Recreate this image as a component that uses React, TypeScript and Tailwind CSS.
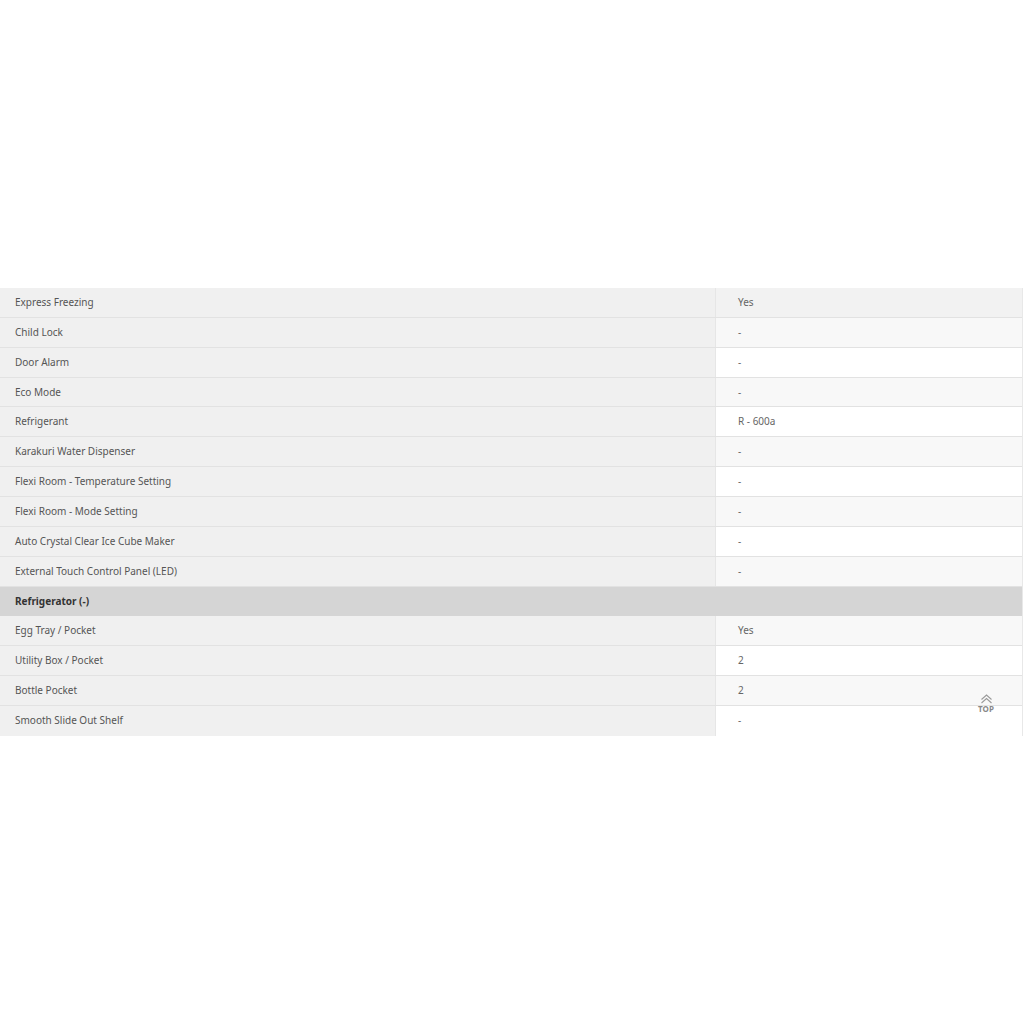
import React from "react";

type Row = { label: string; value?: string; heading?: boolean; rightBg?: string };

const rows: Row[] = [
  { label: "Express Freezing", value: "Yes", rightBg: "bg-[#f2f2f2]" },
  { label: "Child Lock", value: "-", rightBg: "bg-[#f8f8f8]" },
  { label: "Door Alarm", value: "-", rightBg: "bg-white" },
  { label: "Eco Mode", value: "-", rightBg: "bg-[#f8f8f8]" },
  { label: "Refrigerant", value: "R - 600a", rightBg: "bg-white" },
  { label: "Karakuri Water Dispenser", value: "-", rightBg: "bg-[#f8f8f8]" },
  { label: "Flexi Room - Temperature Setting", value: "-", rightBg: "bg-white" },
  { label: "Flexi Room - Mode Setting", value: "-", rightBg: "bg-[#f8f8f8]" },
  { label: "Auto Crystal Clear Ice Cube Maker", value: "-", rightBg: "bg-white" },
  { label: "External Touch Control Panel (LED)", value: "-", rightBg: "bg-[#f8f8f8]" },
  { label: "Refrigerator (-)", heading: true },
  { label: "Egg Tray / Pocket", value: "Yes", rightBg: "bg-[#f8f8f8]" },
  { label: "Utility Box / Pocket", value: "2", rightBg: "bg-white" },
  { label: "Bottle Pocket", value: "2", rightBg: "bg-[#f8f8f8]" },
  { label: "Smooth Slide Out Shelf", value: "-", rightBg: "bg-white" },
];

export default function App() {
  return (
    <div
      className="relative w-[1024px] h-[1024px] bg-white"
      style={{ fontFamily: '"Noto Sans", "Open Sans", sans-serif' }}
    >
      <div className="h-[288px]" />
      <div className="w-[1023px] border-r border-[#e8e8e8]">
        {rows.map((r, i) =>
          r.heading ? (
            <div
              key={i}
              className="h-[29.87px] flex items-center bg-[#d5d5d5] border-b border-[#d5d5d5] pl-[15px] text-[10px] font-bold text-[#333]"
            >
              {r.label}
            </div>
          ) : (
            <div key={i} className="h-[29.87px] flex border-b border-[#e2e2e2] last:border-b-0">
              <div className="w-[716px] shrink-0 flex items-center bg-[#f0f0f0] border-r border-[#e6e6e6] pl-[15px] text-[10px] text-[#555]">
                {r.label}
              </div>
              <div className={`flex-1 flex items-center pl-[22px] text-[10px] text-[#666] ${r.rightBg}`}>
                {r.value}
              </div>
            </div>
          )
        )}
      </div>
      <div className="absolute left-[976px] top-[694px] w-[20px] flex flex-col items-center">
        <svg width="13" height="10" viewBox="0 0 13 10" fill="none" stroke="#9a9a9a" strokeWidth="1.1">
          <path d="M1.5 5.5 L6.5 1 L11.5 5.5" />
          <path d="M1.5 9 L6.5 4.5 L11.5 9" />
        </svg>
        <span className="text-[8px] font-bold leading-none mt-[1px] text-[#888]">TOP</span>
      </div>
    </div>
  );
}
